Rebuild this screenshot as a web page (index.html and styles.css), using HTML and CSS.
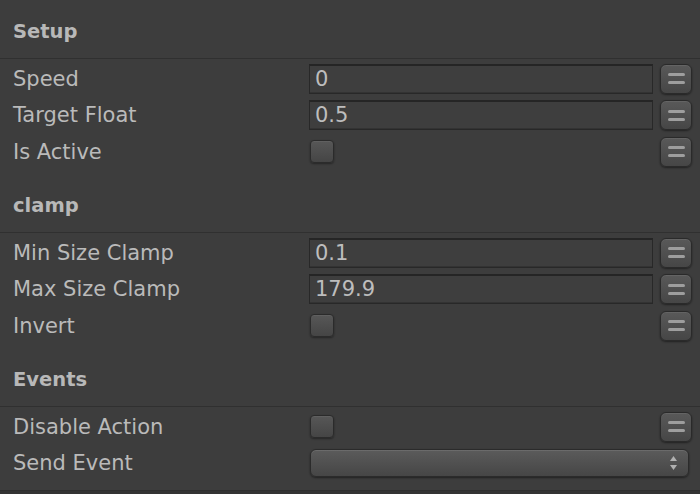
FILE: index.html
```html
<!DOCTYPE html>
<html>
<head>
<meta charset="utf-8">
<link rel="stylesheet" href="styles.css">
</head>
<body>
<div class="inspector">
  <section class="group first">
    <div class="group-header">Setup</div>
    <div class="rows">
      <div class="row">
        <span class="label">Speed</span>
        <div class="field">0</div>
        <button class="menu-btn"><svg width="17" height="11" viewBox="0 0 17 11"><rect x="0" y="0" width="17" height="3" rx="1.5"/><rect x="0" y="8" width="17" height="3" rx="1.5"/></svg></button>
      </div>
      <div class="row">
        <span class="label">Target Float</span>
        <div class="field">0.5</div>
        <button class="menu-btn"><svg width="17" height="11" viewBox="0 0 17 11"><rect x="0" y="0" width="17" height="3" rx="1.5"/><rect x="0" y="8" width="17" height="3" rx="1.5"/></svg></button>
      </div>
      <div class="row">
        <span class="label">Is Active</span>
        <div class="check-cell"><span class="checkbox"></span></div>
        <button class="menu-btn"><svg width="17" height="11" viewBox="0 0 17 11"><rect x="0" y="0" width="17" height="3" rx="1.5"/><rect x="0" y="8" width="17" height="3" rx="1.5"/></svg></button>
      </div>
    </div>
  </section>
  <section class="group">
    <div class="group-header">clamp</div>
    <div class="rows">
      <div class="row">
        <span class="label">Min Size Clamp</span>
        <div class="field">0.1</div>
        <button class="menu-btn"><svg width="17" height="11" viewBox="0 0 17 11"><rect x="0" y="0" width="17" height="3" rx="1.5"/><rect x="0" y="8" width="17" height="3" rx="1.5"/></svg></button>
      </div>
      <div class="row">
        <span class="label">Max Size Clamp</span>
        <div class="field">179.9</div>
        <button class="menu-btn"><svg width="17" height="11" viewBox="0 0 17 11"><rect x="0" y="0" width="17" height="3" rx="1.5"/><rect x="0" y="8" width="17" height="3" rx="1.5"/></svg></button>
      </div>
      <div class="row">
        <span class="label">Invert</span>
        <div class="check-cell"><span class="checkbox"></span></div>
        <button class="menu-btn"><svg width="17" height="11" viewBox="0 0 17 11"><rect x="0" y="0" width="17" height="3" rx="1.5"/><rect x="0" y="8" width="17" height="3" rx="1.5"/></svg></button>
      </div>
    </div>
  </section>
  <section class="group">
    <div class="group-header">Events</div>
    <div class="rows last">
      <div class="row">
        <span class="label">Disable Action</span>
        <div class="check-cell"><span class="checkbox"></span></div>
        <button class="menu-btn"><svg width="17" height="11" viewBox="0 0 17 11"><rect x="0" y="0" width="17" height="3" rx="1.5"/><rect x="0" y="8" width="17" height="3" rx="1.5"/></svg></button>
      </div>
      <div class="row">
        <span class="label">Send Event</span>
        <div class="dropdown"><svg class="updown" width="7" height="14" viewBox="0 0 7 14"><polygon points="3.5,0 7,5 0,5"/><polygon points="0,9 7,9 3.5,14"/></svg></div>
      </div>
    </div>
  </section>
</div>
<div class="footer"></div>
</body>
</html>
```
FILE: styles.css
```css
html, body {
  margin: 0;
  padding: 0;
  background: #3d3d3d;
  width: 700px;
  height: 494px;
  overflow: hidden;
}
body {
  font-family: "DejaVu Sans", "Liberation Sans", sans-serif;
  color: #bababa;
  display: flex;
  flex-direction: column;
}
.inspector {
  flex: 1;
}
.group.first {
  margin-top: -4px;
}
.group-header {
  height: 53px;
  padding: 9px 13px 0 13px;
  display: flex;
  align-items: center;
  font-weight: bold;
  font-size: 19.5px;
  color: #b8b8b8;
  border-bottom: 1px solid #303030;
}
.rows {
  padding-top: 1.5px;
}
.row {
  height: 36.5px;
  padding: 0 8px 0 13px;
  display: grid;
  grid-template-columns: 296px 1fr 39px;
  align-items: center;
}
.label {
  font-size: 21px;
  white-space: nowrap;
}
.field {
  height: 27px;
  box-sizing: content-box;
  border: 1px solid #282828;
  border-top: 2px solid #252525;
  background: #3e3e3e;
  box-shadow: inset 0 -1px 0 #333;
  padding-left: 5px;
  font-size: 21px;
  line-height: 27px;
  color: #bdbdbd;
}
.menu-btn {
  justify-self: end;
  width: 32px;
  height: 30px;
  padding: 0;
  margin: 0;
  border: 1px solid #2a2a2a;
  border-radius: 6px;
  background: linear-gradient(#595959, #464646);
  box-shadow: 0 1px 2px rgba(0,0,0,0.45), inset 0 1px 0 rgba(255,255,255,0.07);
  display: flex;
  align-items: center;
  justify-content: center;
}
.menu-btn svg {
  fill: #9e9e9e;
  display: block;
}
.check-cell {
  display: flex;
  align-items: center;
  padding-left: 1px;
}
.checkbox {
  width: 22px;
  height: 21px;
  border: 1px solid #2b2b2b;
  border-radius: 4px;
  background: linear-gradient(#575757, #454545);
  box-shadow: 0 1px 2px rgba(0,0,0,0.4), inset 0 1px 0 rgba(255,255,255,0.06);
}
.dropdown {
  grid-column: 2 / 4;
  margin: 0 3px 0 1px;
  height: 26px;
  border: 1px solid #2b2b2b;
  border-radius: 6px;
  background: linear-gradient(#5b5b5b, #464646);
  box-shadow: 0 1px 2px rgba(0,0,0,0.45), inset 0 1px 0 rgba(255,255,255,0.1);
  display: flex;
  align-items: center;
  justify-content: flex-end;
  padding-right: 11px;
}
.updown {
  fill: #b0b0b0;
  display: block;
}
.footer {
  height: 3px;
  background: #333333;
  border-top: 1px solid #2e2e2e;
}
```
